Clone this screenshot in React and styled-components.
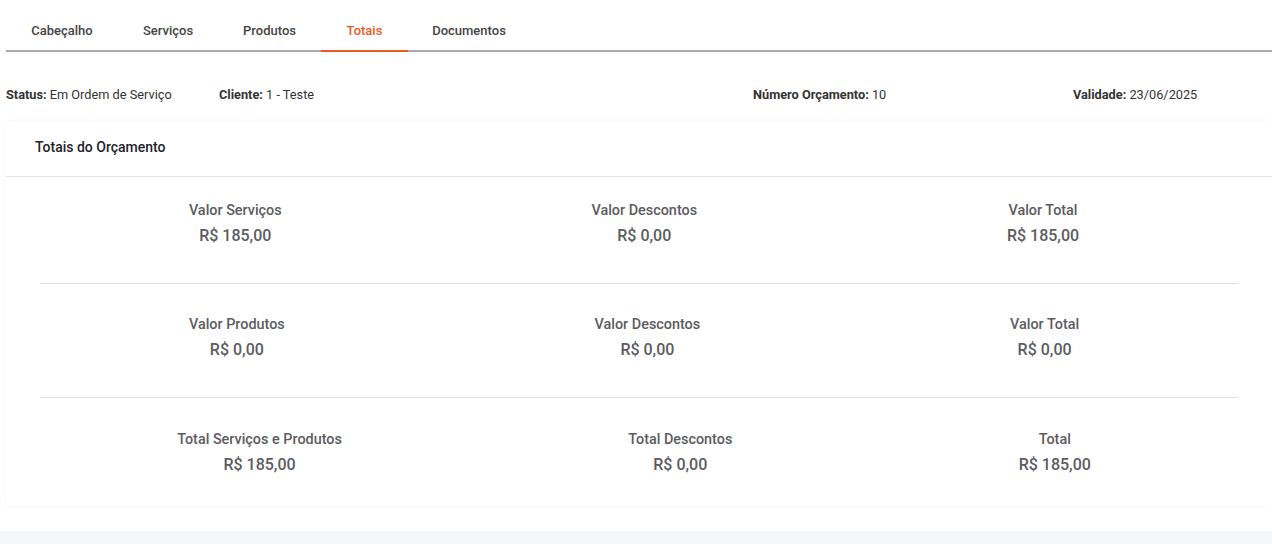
import styled, { createGlobalStyle } from 'styled-components';

const GlobalStyle = createGlobalStyle`
    html, body {
        margin:0;
        padding:0;
        background-color:#f6f7f9;
        font-family:Roboto, "Liberation Sans", sans-serif;
    }
`;

const Page = styled.div`
    background-color:white;
    padding:0 0 25px 6px;
`;

const TabBar = styled.ul`
    display:flex;
    margin:0;
    padding:0;
    height:50px;
    align-items:stretch;
    border-bottom:2px solid #a9a9a9;
`;

const Tab = styled.li`
    list-style:none;
    display:flex;
    align-items:center;
    justify-content:center;
    width:${p => p.$width}px;
    padding-top:10px;
    box-sizing:border-box;
    font-size:13px;
    font-weight:500;
    color:${p => p.$active ? '#ec5a24' : '#444'};
    margin-bottom:-2px;
    border-bottom:2px solid ${p => p.$active ? '#ec5a24' : 'transparent'};
    cursor:pointer;
`;

const InfoRow = styled.div`
    display:grid;
    grid-template-columns:213px 534px 320px 1fr;
    padding:35px 0 0;
    height:34px;
    font-size:12.75px;
    color:#333;
`;

const InfoItem = styled.div`
    b {
        font-weight:700;
        color:#333;
    }
`;

const Card = styled.div`
    background-color:white;
    border-radius:6px;
    box-shadow:0 0 4px rgba(0,0,0,.06);
`;

const CardHeader = styled.div`
    height:56px;
    box-sizing:border-box;
    padding:0 0 4px 29px;
    display:flex;
    align-items:center;
    font-size:14px;
    font-weight:500;
    color:#1f2329;
    border-bottom:1px solid #e2e2e2;
`;

const CardBody = styled.div`
    padding:0 34px;
`;

const TotalsRow = styled.div`
    padding:${p => p.$first ? '25px' : p.$last ? '33px' : '32px'} 0 ${p => p.$last ? '32px' : '38px'};
    border-bottom:${p => p.$last ? 'none' : '1px solid #e0e0e0'};
`;

// itens crescem a partir da largura do conteúdo
const TotalsItems = styled.div`
    display:flex;
    margin:0 4px 0 -6px;
`;

const TotalItem = styled.div`
    flex:1 1 auto;
    display:flex;
    flex-direction:column;
    align-items:center;
    gap:7px;
`;

const TotalLabel = styled.span`
    font-size:14.4px;
    line-height:17px;
    font-weight:500;
    color:#5c5c5f;
`;

const TotalValue = styled.span`
    font-size:16px;
    line-height:19px;
    font-weight:500;
    color:#5c5c5f;
`;

const tabs = [
    { label: 'Cabeçalho', width: 112 },
    { label: 'Serviços', width: 100 },
    { label: 'Produtos', width: 103 },
    { label: 'Totais', width: 87, active: true },
    { label: 'Documentos', width: 122 },
];

const rows = [
    [['Valor Serviços', 'R$ 185,00'], ['Valor Descontos', 'R$ 0,00'], ['Valor Total', 'R$ 185,00']],
    [['Valor Produtos', 'R$ 0,00'], ['Valor Descontos', 'R$ 0,00'], ['Valor Total', 'R$ 0,00']],
    [['Total Serviços e Produtos', 'R$ 185,00'], ['Total Descontos', 'R$ 0,00'], ['Total', 'R$ 185,00']],
];

const App = () => {
    return (
        <>
            <GlobalStyle />
            <Page>
                <TabBar>
                    {tabs.map(t => (
                        <Tab key={t.label} $width={t.width} $active={t.active}>{t.label}</Tab>
                    ))}
                </TabBar>
                <InfoRow>
                    <InfoItem><b>Status:</b> Em Ordem de Serviço</InfoItem>
                    <InfoItem><b>Cliente:</b> 1 - Teste</InfoItem>
                    <InfoItem><b>Número Orçamento:</b> 10</InfoItem>
                    <InfoItem><b>Validade:</b> 23/06/2025</InfoItem>
                </InfoRow>
                <Card>
                    <CardHeader>Totais do Orçamento</CardHeader>
                    <CardBody>
                        {rows.map((row, i) => (
                            <TotalsRow key={i} $first={i === 0} $last={i === rows.length - 1}>
                                <TotalsItems>
                                    {row.map(([label, value], j) => (
                                        <TotalItem key={j}>
                                            <TotalLabel>{label}</TotalLabel>
                                            <TotalValue>{value}</TotalValue>
                                        </TotalItem>
                                    ))}
                                </TotalsItems>
                            </TotalsRow>
                        ))}
                    </CardBody>
                </Card>
            </Page>
        </>
    );
};

export default App;
